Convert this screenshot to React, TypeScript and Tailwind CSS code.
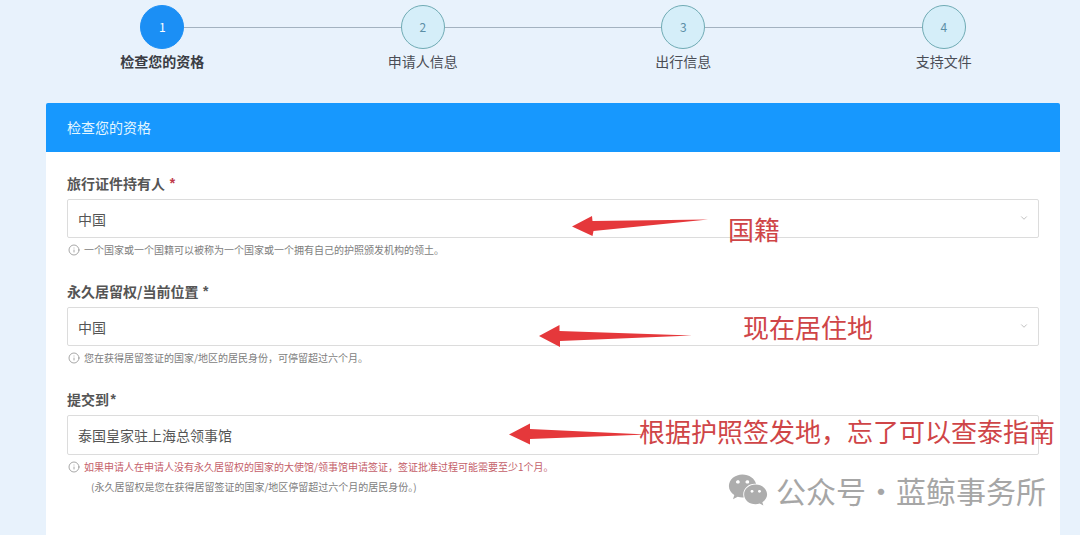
import { ReactNode } from "react";
import { ChevronDown, Info } from "lucide-react";
import { FaWeixin } from "react-icons/fa";

const steps = ["检查您的资格", "申请人信息", "出行信息", "支持文件"];

function Stepper({ current }: { current: number }) {
  return (
    <ol className="flex pt-[5px]">
      {steps.map((label, index) => {
        const active = index === current;
        return (
          <li key={label} className="flex flex-1 flex-col items-center">
            <div className="flex w-full items-center">
              <span className={`h-px flex-1 ${index === 0 ? "" : "bg-[#a3b2c0]"}`} />
              <span
                className={`flex h-11 w-11 items-center justify-center rounded-full border text-xs ${
                  active
                    ? "border-[#1b8ff5] bg-[#1b8ff5] text-white"
                    : "border-[#6fabb4] bg-[#d5eef9] text-[#5c8fa6]"
                }`}
              >
                {index + 1}
              </span>
              <span className={`h-px flex-1 ${index === steps.length - 1 ? "" : "bg-[#a3b2c0]"}`} />
            </div>
            <span className={`text-sm leading-6 ${active ? "font-bold text-[#3a3d44]" : "text-[#4a4d55]"}`}>
              {label}
            </span>
          </li>
        );
      })}
    </ol>
  );
}

function Hint({ children, warning = false }: { children: ReactNode; warning?: boolean }) {
  return (
    <p className={`flex items-center gap-1 text-[10px] leading-6 ${warning ? "text-[#c4606a]" : "text-[#7d7d7d]"}`}>
      <Info className="ml-px h-3 w-3 shrink-0 text-[#8a8a8a]" strokeWidth={1.5} />
      {children}
    </p>
  );
}

function SelectField({
  id,
  label,
  mark,
  value,
  hint,
}: {
  id: string;
  label: string;
  mark: string;
  value: string;
  hint: string;
}) {
  return (
    <div>
      <label htmlFor={id} className="block text-sm font-bold leading-6 text-[#555]">
        {label} <span className={`font-['Liberation_Mono',monospace] leading-none ${mark}`}>*</span>
      </label>
      <div className="relative mt-1">
        <select
          id={id}
          defaultValue={value}
          className="block h-[39px] w-full appearance-none rounded-xs border border-[#dcdcdc] bg-white px-2.5 text-sm text-[#555]"
        >
          <option>{value}</option>
        </select>
        <ChevronDown
          className="pointer-events-none absolute right-2.5 top-3.5 h-2.5 w-2.5 text-[#b5b5b5]"
          strokeWidth={2}
        />
      </div>
      <Hint>{hint}</Hint>
    </div>
  );
}

function Note({ children, className }: { children: ReactNode; className: string }) {
  return (
    <span className={`pointer-events-none absolute whitespace-nowrap text-[26px] leading-8 text-[#cf4547] ${className}`}>
      {children}
    </span>
  );
}

function Arrow({ points, className }: { points: string; className: string }) {
  return (
    <svg className={`pointer-events-none absolute h-6 w-40 ${className}`} viewBox="0 0 160 24">
      <polygon points={points} fill="#e5383b" />
    </svg>
  );
}

export default function App() {
  return (
    <div className="min-h-screen bg-[#e8f2fc] pl-8 pr-1.5 font-['Noto_Sans_CJK_SC',sans-serif]">
      <Stepper current={0} />

      <main className="mx-3.5 mt-[30px]">
        <h1 className="rounded-t-xs bg-[#1798fe] px-[21px] py-3 text-sm leading-[25px] text-[#e3f6ff]">
          检查您的资格
        </h1>
        <form className="relative flex min-h-[383px] flex-col gap-[17px] bg-white px-[21px] pt-[19px]">
          <SelectField
            id="holder"
            label="旅行证件持有人"
            mark="text-[#c0394b]"
            value="中国"
            hint="一个国家或一个国籍可以被称为一个国家或一个拥有自己的护照颁发机构的领土。"
          />
          <SelectField
            id="residence"
            label="永久居留权/当前位置"
            mark="text-[#555]"
            value="中国"
            hint="您在获得居留签证的国家/地区的居民身份，可停留超过六个月。"
          />
          <div>
            <label htmlFor="submit-to" className="block text-sm font-bold leading-6 text-[#555]">
              提交到<span className="font-['Liberation_Mono',monospace] leading-none">*</span>
            </label>
            <input
              id="submit-to"
              type="text"
              defaultValue="泰国皇家驻上海总领事馆"
              className="mt-1 block h-10 w-full rounded-xs border border-[#dcdcdc] bg-white px-2.5 text-sm text-[#555]"
            />
            <Hint warning>
              如果申请人在申请人没有永久居留权的国家的大使馆/领事馆申请签证，签证批准过程可能需要至少1个月。
            </Hint>
            <p className="pl-6 text-[10px] leading-4 text-[#7d7d7d]">
              (永久居留权是您在获得居留签证的国家/地区停留超过六个月的居民身份。)
            </p>
          </div>

          <Arrow className="left-[526px] top-[62px]" points="0,12.5 20,2 20.5,7 136,5.5 21.5,17 20.5,22" />
          <Note className="left-[682px] top-[61px]">国籍</Note>
          <Arrow className="left-[493px] top-[172px]" points="0,12 20.5,1 20.5,7 153,11.5 21,17 21,23" />
          <Note className="left-[697px] top-[159px]">现在居住地</Note>
          <Arrow className="left-[463px] top-[270px]" points="0,12.5 21,1.5 21,7 138,12.5 21,17 21,22.5" />
          <Note className="left-[593px] top-[263px]">根据护照签发地，忘了可以查泰指南</Note>

          <div className="pointer-events-none absolute right-3.5 top-[318px] flex items-center gap-2 text-[30px] leading-10 text-[#a6a6a6]">
            <FaWeixin className="h-10 w-10 text-[#adadad]" />
            <span className="whitespace-nowrap">公众号·蓝鲸事务所</span>
          </div>
        </form>
      </main>
    </div>
  );
}
